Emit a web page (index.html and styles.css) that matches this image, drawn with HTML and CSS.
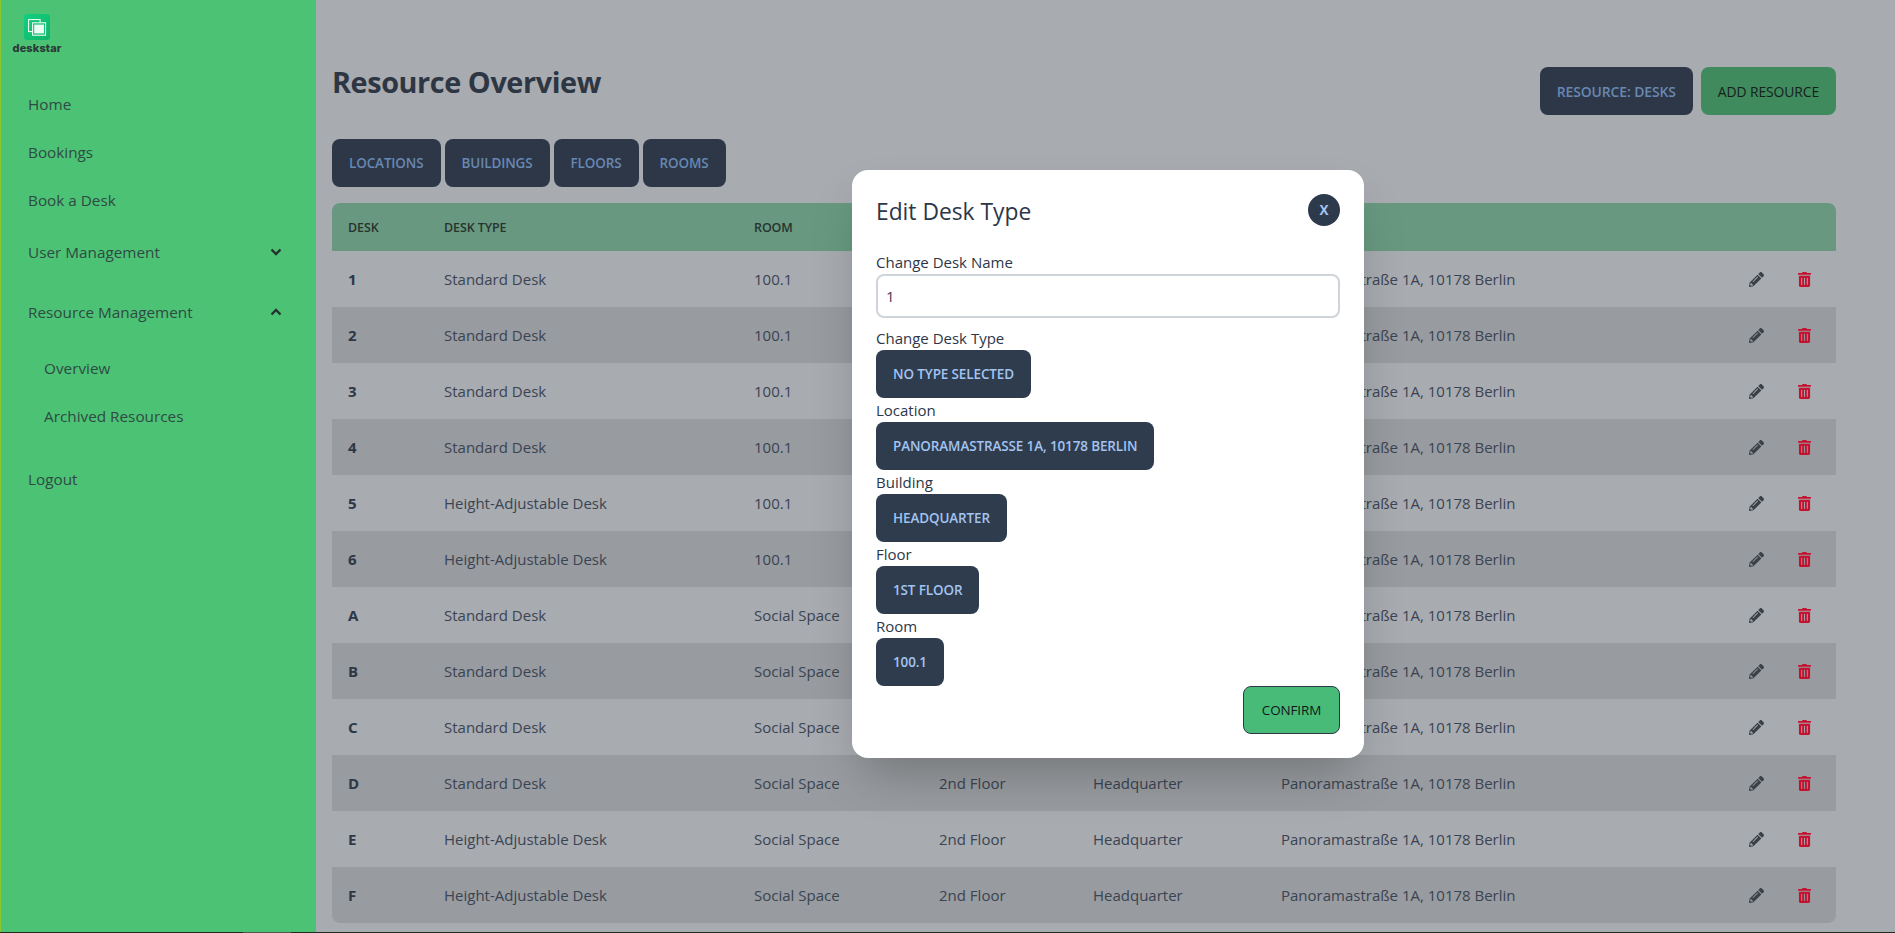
FILE: index.html
```html
<!DOCTYPE html>
<html lang="en">
<head>
    <meta charset="UTF-8">
    <meta name="viewport" content="width=device-width, initial-scale=1.0">
    <title>Resource Overview</title>
    <link rel="stylesheet" href="styles.css">
</head>
<body>
    <svg class="defs" width="0" height="0">
        <symbol id="pencil" viewBox="0 0 512 512"><path d="M497.9 142.1l-46.1 46.1c-4.7 4.7-12.3 4.7-17 0l-111-111c-4.7-4.7-4.7-12.3 0-17l46.1-46.1c18.7-18.7 49.1-18.7 67.9 0l60.1 60.1c18.8 18.7 18.8 49.1 0 67.9zM284.2 99.8L21.6 362.4.4 483.9c-2.9 16.4 11.4 30.6 27.8 27.8l121.5-21.3 262.6-262.6c4.7-4.7 4.7-12.3 0-17l-111-111c-4.8-4.7-12.4-4.7-17.1 0zM124.1 339.9c-5.5-5.5-5.5-14.3 0-19.8l154-154c5.5-5.5 14.3-5.5 19.8 0s5.5 14.3 0 19.8l-154 154c-5.5 5.5-14.3 5.5-19.8 0zM88 424h48v36.3l-64.5 11.3-31.1-31.1L51.7 376H88v48z"/></symbol>
        <symbol id="trash" viewBox="0 0 448 512"><path d="M32 464a48 48 0 0 0 48 48h288a48 48 0 0 0 48-48V128H32zm272-256a16 16 0 0 1 32 0v224a16 16 0 0 1-32 0zm-96 0a16 16 0 0 1 32 0v224a16 16 0 0 1-32 0zm-96 0a16 16 0 0 1 32 0v224a16 16 0 0 1-32 0zM432 32H312l-9.4-18.7A24 24 0 0 0 281.1 0H166.8a23.72 23.72 0 0 0-21.4 13.3L136 32H16A16 16 0 0 0 0 48v32a16 16 0 0 0 16 16h416a16 16 0 0 0 16-16V48a16 16 0 0 0-16-16z"/></symbol>
    </svg>

    <div class="app">
        <aside class="sidebar">
            <div class="logo">
                <svg class="logo-mark" width="26" height="26" viewBox="0 0 26 26">
                    <defs>
                        <linearGradient id="logoGrad" x1="0" y1="0" x2="1" y2="1">
                            <stop offset="0" stop-color="#10d07f"/>
                            <stop offset="1" stop-color="#12b368"/>
                        </linearGradient>
                    </defs>
                    <rect width="26" height="26" rx="3" fill="url(#logoGrad)"/>
                    <rect x="4.6" y="5.6" width="11.5" height="12" fill="none" stroke="#fff" stroke-width="1"/>
                    <rect x="8.6" y="8.8" width="13" height="12.4" fill="#12c274" stroke="#fff" stroke-width="1"/>
                    <rect x="10.2" y="10.6" width="9.8" height="8.8" fill="#ecfbf4"/>
                </svg>
                <span class="logo-text">deskstar</span>
            </div>
            <nav class="nav">
                <a class="nav-item">Home</a>
                <a class="nav-item">Bookings</a>
                <a class="nav-item">Book a Desk</a>
                <a class="nav-item nav-group nav-user">User Management
                    <svg class="chevron" width="12" height="8" viewBox="0 0 12 8"><path d="M1.5 1.5 6 6l4.5-4.5"/></svg>
                </a>
                <a class="nav-item nav-group nav-resource">Resource Management
                    <svg class="chevron" width="12" height="8" viewBox="0 0 12 8"><path d="M1.5 6.5 6 2l4.5 4.5"/></svg>
                </a>
                <a class="nav-item nav-sub">Overview</a>
                <a class="nav-item nav-sub">Archived Resources</a>
                <a class="nav-item nav-logout">Logout</a>
            </nav>
        </aside>

        <main class="main">
            <div class="top-row">
                <h1>Resource Overview</h1>
                <div class="top-actions">
                    <button class="btn btn-dark">Resource: Desks</button>
                    <button class="btn btn-green-dim">Add Resource</button>
                </div>
            </div>
            <div class="tabs">
                <button class="btn btn-dark">Locations</button>
                <button class="btn btn-dark">Buildings</button>
                <button class="btn btn-dark">Floors</button>
                <button class="btn btn-dark">Rooms</button>
            </div>
            <table class="desks">
                <colgroup>
                    <col class="c-desk"><col class="c-type"><col class="c-room"><col class="c-floor"><col class="c-building"><col class="c-location"><col class="c-edit"><col class="c-del">
                </colgroup>
                <thead>
                    <tr><th>Desk</th><th>Desk Type</th><th>Room</th><th>Floor</th><th>Building</th><th>Location</th><th></th><th></th></tr>
                </thead>
                <tbody>
                    <tr><td class="name">1</td><td>Standard Desk</td><td>100.1</td><td>1st Floor</td><td>Headquarter</td><td>Panoramastraße 1A, 10178 Berlin</td><td class="icon"><svg class="i-edit"><use href="#pencil"/></svg></td><td class="icon"><svg class="i-del"><use href="#trash"/></svg></td></tr>
                    <tr><td class="name">2</td><td>Standard Desk</td><td>100.1</td><td>1st Floor</td><td>Headquarter</td><td>Panoramastraße 1A, 10178 Berlin</td><td class="icon"><svg class="i-edit"><use href="#pencil"/></svg></td><td class="icon"><svg class="i-del"><use href="#trash"/></svg></td></tr>
                    <tr><td class="name">3</td><td>Standard Desk</td><td>100.1</td><td>1st Floor</td><td>Headquarter</td><td>Panoramastraße 1A, 10178 Berlin</td><td class="icon"><svg class="i-edit"><use href="#pencil"/></svg></td><td class="icon"><svg class="i-del"><use href="#trash"/></svg></td></tr>
                    <tr><td class="name">4</td><td>Standard Desk</td><td>100.1</td><td>1st Floor</td><td>Headquarter</td><td>Panoramastraße 1A, 10178 Berlin</td><td class="icon"><svg class="i-edit"><use href="#pencil"/></svg></td><td class="icon"><svg class="i-del"><use href="#trash"/></svg></td></tr>
                    <tr><td class="name">5</td><td>Height-Adjustable Desk</td><td>100.1</td><td>1st Floor</td><td>Headquarter</td><td>Panoramastraße 1A, 10178 Berlin</td><td class="icon"><svg class="i-edit"><use href="#pencil"/></svg></td><td class="icon"><svg class="i-del"><use href="#trash"/></svg></td></tr>
                    <tr><td class="name">6</td><td>Height-Adjustable Desk</td><td>100.1</td><td>1st Floor</td><td>Headquarter</td><td>Panoramastraße 1A, 10178 Berlin</td><td class="icon"><svg class="i-edit"><use href="#pencil"/></svg></td><td class="icon"><svg class="i-del"><use href="#trash"/></svg></td></tr>
                    <tr><td class="name">A</td><td>Standard Desk</td><td>Social Space</td><td>2nd Floor</td><td>Headquarter</td><td>Panoramastraße 1A, 10178 Berlin</td><td class="icon"><svg class="i-edit"><use href="#pencil"/></svg></td><td class="icon"><svg class="i-del"><use href="#trash"/></svg></td></tr>
                    <tr><td class="name">B</td><td>Standard Desk</td><td>Social Space</td><td>2nd Floor</td><td>Headquarter</td><td>Panoramastraße 1A, 10178 Berlin</td><td class="icon"><svg class="i-edit"><use href="#pencil"/></svg></td><td class="icon"><svg class="i-del"><use href="#trash"/></svg></td></tr>
                    <tr><td class="name">C</td><td>Standard Desk</td><td>Social Space</td><td>2nd Floor</td><td>Headquarter</td><td>Panoramastraße 1A, 10178 Berlin</td><td class="icon"><svg class="i-edit"><use href="#pencil"/></svg></td><td class="icon"><svg class="i-del"><use href="#trash"/></svg></td></tr>
                    <tr><td class="name">D</td><td>Standard Desk</td><td>Social Space</td><td>2nd Floor</td><td>Headquarter</td><td>Panoramastraße 1A, 10178 Berlin</td><td class="icon"><svg class="i-edit"><use href="#pencil"/></svg></td><td class="icon"><svg class="i-del"><use href="#trash"/></svg></td></tr>
                    <tr><td class="name">E</td><td>Height-Adjustable Desk</td><td>Social Space</td><td>2nd Floor</td><td>Headquarter</td><td>Panoramastraße 1A, 10178 Berlin</td><td class="icon"><svg class="i-edit"><use href="#pencil"/></svg></td><td class="icon"><svg class="i-del"><use href="#trash"/></svg></td></tr>
                    <tr><td class="name">F</td><td>Height-Adjustable Desk</td><td>Social Space</td><td>2nd Floor</td><td>Headquarter</td><td>Panoramastraße 1A, 10178 Berlin</td><td class="icon"><svg class="i-edit"><use href="#pencil"/></svg></td><td class="icon"><svg class="i-del"><use href="#trash"/></svg></td></tr>
                </tbody>
            </table>
        </main>
    </div>
    <div class="bottom-line"><span></span></div>

    <div class="modal">
        <div class="modal-head">
            <h2>Edit Desk Type</h2>
            <button class="modal-close">X</button>
        </div>
        <label class="field-label">Change Desk Name</label>
        <input class="field-input" type="text" value="1">
        <label class="field-label">Change Desk Type</label>
        <button class="btn btn-modal">No Type Selected</button>
        <label class="field-label">Location</label>
        <button class="btn btn-modal">Panoramastrasse 1A, 10178 Berlin</button>
        <label class="field-label">Building</label>
        <button class="btn btn-modal">Headquarter</button>
        <label class="field-label">Floor</label>
        <button class="btn btn-modal">1st Floor</button>
        <label class="field-label">Room</label>
        <button class="btn btn-modal">100.1</button>
        <div class="modal-foot">
            <button class="btn btn-confirm">Confirm</button>
        </div>
    </div>
</body>
</html>
```

FILE: styles.css
```css
* {
    box-sizing: border-box;
}
html, body {
    height: 100%;
    margin: 0;
}
body {
    display: flex;
    flex-direction: column;
    overflow: hidden;
    font-family: "Open Sans", "Noto Sans", sans-serif;
    font-size: 15px;
    color: #2f3a4a;
    background: #a8abb0;
}
.defs {
    position: absolute;
}
.app {
    flex: 1;
    display: flex;
    min-height: 0;
}
.bottom-line {
    height: 1px;
    background: #1e2a22;
    padding-left: 243px;
}
.bottom-line span {
    display: block;
    width: 48px;
    height: 1px;
    background: #4c5a50;
}

/* sidebar */
.sidebar {
    width: 316px;
    flex-shrink: 0;
    background: #4cc274;
    border-left: 1px solid #8cc52c;
}
.logo {
    display: flex;
    flex-direction: column;
    align-items: center;
    width: 50px;
    margin-left: 11px;
    padding-top: 14px;
}
.logo-text {
    font-family: "Inter", sans-serif;
    font-size: 11px;
    font-weight: 800;
    line-height: 13px;
    letter-spacing: 0.1px;
    color: #2b3a38;
    margin-top: 2px;
}
.nav {
    padding-top: 25px;
}
.nav-item {
    display: flex;
    align-items: center;
    justify-content: space-between;
    height: 48px;
    padding: 0 34px 0 27px;
    font-size: 15.3px;
    color: #2f4a45;
}
.nav-user {
    margin-top: 4px;
}
.nav-resource {
    margin-top: 12px;
}
.nav-resource + .nav-sub {
    margin-top: 8px;
}
.nav-sub {
    padding-left: 43px;
}
.nav-logout {
    margin-top: 15px;
}
.chevron {
    fill: none;
    stroke: #26322f;
    stroke-width: 2.4;
}

/* main area */
.main {
    flex: 1;
    padding: 67px 59px 0 16px;
    min-width: 0;
}
.top-row {
    display: flex;
    justify-content: space-between;
    align-items: flex-start;
}
h1 {
    margin: 0;
    font-size: 28.8px;
    font-weight: 700;
    line-height: 30px;
    letter-spacing: -0.4px;
    color: #2d3642;
}
.top-actions {
    display: flex;
    gap: 8px;
}
.top-actions .btn {
    font-size: 13.9px;
}
.tabs {
    display: flex;
    gap: 4px;
    margin-top: 24px;
    margin-bottom: 16px;
}
.btn {
    height: 48px;
    padding: 0 17px;
    border: none;
    border-radius: 8px;
    font-family: inherit;
    font-size: 13.45px;
    font-weight: 600;
    letter-spacing: -0.1px;
    text-transform: uppercase;
    white-space: nowrap;
}
.btn-dark {
    background: #2d3748;
    color: #6888b2;
}
.btn-green-dim {
    background: #3f8b5d;
    color: #16211c;
    font-weight: 500;
}

/* table */
.desks {
    width: 1504px;
    table-layout: fixed;
    border-collapse: separate;
    border-spacing: 0;
}
.c-desk { width: 96px; }
.c-type { width: 310px; }
.c-room { width: 185px; }
.c-floor { width: 154px; }
.c-building { width: 188px; }
.c-location { width: 483px; }
.c-edit { width: 50px; }
.c-del { width: 38px; }
.desks th {
    height: 48px;
    padding: 0 0 0 16px;
    background: #689980;
    font-size: 12.5px;
    font-weight: 600;
    letter-spacing: -0.1px;
    text-align: left;
    text-transform: uppercase;
    color: #27332f;
}
.desks th:first-child {
    border-top-left-radius: 8px;
}
.desks th:last-child {
    border-top-right-radius: 8px;
}
.desks td {
    height: 56px;
    padding: 0 0 0 16px;
    color: #3a4452;
}
.desks td.name {
    font-weight: 700;
    color: #2d3748;
}
.desks tbody tr:nth-child(even) td {
    background: #989b9f;
}
.desks tbody tr:last-child td:first-child {
    border-bottom-left-radius: 8px;
}
.desks tbody tr:last-child td:last-child {
    border-bottom-right-radius: 8px;
}
.desks td.icon {
    padding: 0;
    text-align: left;
    line-height: 0;
}
.i-edit {
    width: 15px;
    height: 15px;
    fill: #3a4048;
    margin-left: 1px;
}
.i-del {
    width: 13px;
    height: 15px;
    fill: #c41230;
}

/* modal */
.modal {
    position: absolute;
    left: 852px;
    top: 170px;
    width: 512px;
    height: 588px;
    padding: 24px;
    background: #fff;
    border-radius: 16px;
    box-shadow: 0 25px 50px -12px rgba(0, 0, 0, 0.25);
}
.modal-head {
    display: flex;
    justify-content: space-between;
    align-items: center;
    height: 32px;
    margin-bottom: 24px;
}
h2 {
    margin: 0;
    padding-top: 3px;
    font-size: 22.8px;
    font-weight: 400;
    color: #2d3748;
}
.modal-close {
    width: 32px;
    height: 32px;
    padding: 0;
    border: none;
    border-radius: 50%;
    background: #2d3a4c;
    color: #a3c4f0;
    font-family: inherit;
    font-size: 13.5px;
    font-weight: 700;
}
.field-label {
    display: block;
    height: 24px;
    line-height: 24px;
    color: #2d3748;
}
.field-input {
    display: block;
    width: 100%;
    height: 44px;
    margin-bottom: 8px;
    padding: 0 8px;
    border: 2px solid #cfd4da;
    border-radius: 8px;
    font-family: inherit;
    font-size: 15px;
    color: #4a3a5a;
    outline: none;
}
.btn-modal {
    display: block;
    background: #2f3c4e;
    color: #a3c4f0;
}
.modal-foot {
    display: flex;
    justify-content: flex-end;
}
.btn-confirm {
    background: #48bb78;
    border: 1px solid #2d3748;
    color: #10181a;
    font-weight: 500;
    width: 97px;
    padding: 0;
}
```
